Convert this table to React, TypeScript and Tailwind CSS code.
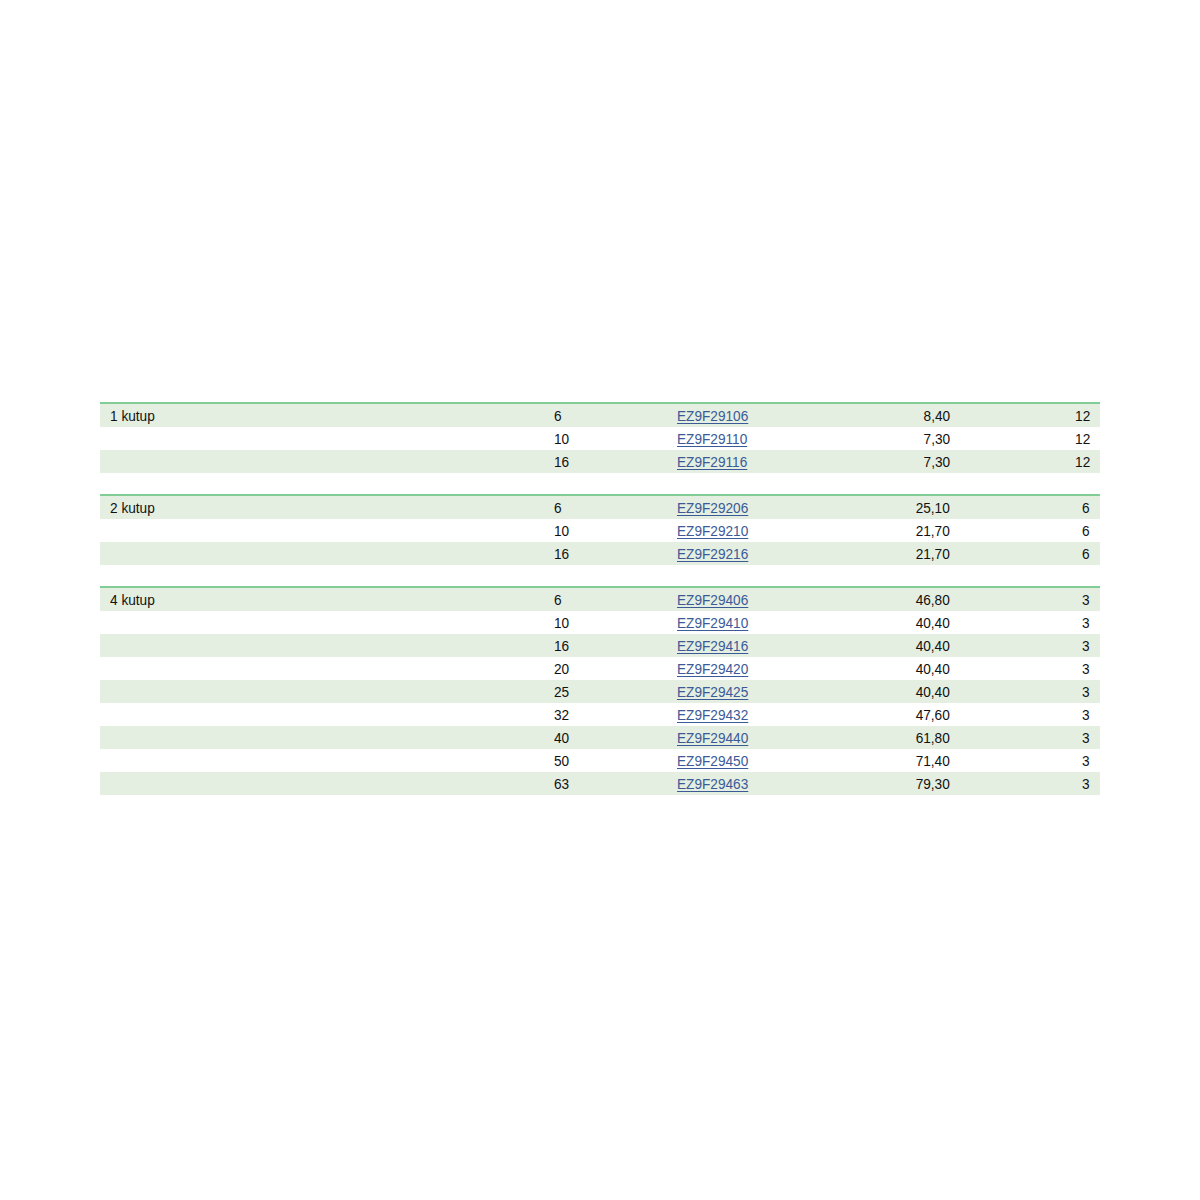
import React from "react";

type Row = { amp: string; code: string; price: string; qty: string };
type Group = { label: string; rows: Row[] };

const groups: Group[] = [
  {
    label: "1 kutup",
    rows: [
      { amp: "6", code: "EZ9F29106", price: "8,40", qty: "12" },
      { amp: "10", code: "EZ9F29110", price: "7,30", qty: "12" },
      { amp: "16", code: "EZ9F29116", price: "7,30", qty: "12" },
    ],
  },
  {
    label: "2 kutup",
    rows: [
      { amp: "6", code: "EZ9F29206", price: "25,10", qty: "6" },
      { amp: "10", code: "EZ9F29210", price: "21,70", qty: "6" },
      { amp: "16", code: "EZ9F29216", price: "21,70", qty: "6" },
    ],
  },
  {
    label: "4 kutup",
    rows: [
      { amp: "6", code: "EZ9F29406", price: "46,80", qty: "3" },
      { amp: "10", code: "EZ9F29410", price: "40,40", qty: "3" },
      { amp: "16", code: "EZ9F29416", price: "40,40", qty: "3" },
      { amp: "20", code: "EZ9F29420", price: "40,40", qty: "3" },
      { amp: "25", code: "EZ9F29425", price: "40,40", qty: "3" },
      { amp: "32", code: "EZ9F29432", price: "47,60", qty: "3" },
      { amp: "40", code: "EZ9F29440", price: "61,80", qty: "3" },
      { amp: "50", code: "EZ9F29450", price: "71,40", qty: "3" },
      { amp: "63", code: "EZ9F29463", price: "79,30", qty: "3" },
    ],
  },
];

// condensed look: the reference uses a narrow face, so squeeze Liberation Sans a bit
const narrowL = "inline-block origin-left scale-x-[0.88]";
const narrowR = "inline-block origin-right scale-x-[0.88]";

function PriceGroup({ group }: { group: Group }) {
  return (
    <div>
      <div className="h-[2px] bg-[#82cc96]" />
      {group.rows.map((row, i) => (
        <div
          key={row.code}
          className={
            "grid h-[23px] grid-cols-[454px_123px_200px_73px_150px] items-center text-[15.5px] leading-none text-[#111] " +
            (i % 2 === 0 ? "bg-[#e4eee1]" : "bg-white")
          }
        >
          <span className="pl-[10px]">
            {i === 0 ? <span className={narrowL}>{group.label}</span> : null}
          </span>
          <span>
            <span className={narrowL}>{row.amp}</span>
          </span>
          <span>
            <a href="#" className={narrowL + " text-[#3a5a98] underline underline-offset-2"}>
              {row.code}
            </a>
          </span>
          <span className="text-right">
            <span className={narrowR}>{row.price}</span>
          </span>
          <span className="pr-[10px] text-right">
            <span className={narrowR}>{row.qty}</span>
          </span>
        </div>
      ))}
    </div>
  );
}

export default function App() {
  return (
    <div
      className="min-h-[1200px] bg-white px-[100px] pt-[402px]"
      style={{ fontFamily: '"Liberation Sans", Arial, sans-serif' }}
    >
      <div className="flex flex-col gap-[21px]">
        {groups.map((g) => (
          <PriceGroup key={g.label} group={g} />
        ))}
      </div>
    </div>
  );
}
